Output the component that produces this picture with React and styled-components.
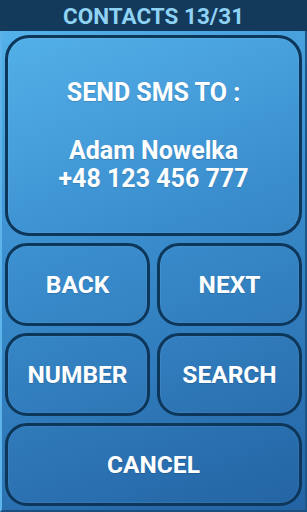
import React from 'react';
import styled, { createGlobalStyle } from 'styled-components';

const GlobalStyle = createGlobalStyle`
  html, body {
    margin: 0;
    padding: 0;
    background: #12385a;
  }
  * { box-sizing: border-box; }
`;

// Layout
const Screen = styled.div`
  width: 307px;
  height: 512px;
  display: flex;
  flex-direction: column;
  font-family: Roboto, 'Liberation Sans', sans-serif;
  overflow: hidden;
`;

const Header = styled.div`
  height: 31px;
  flex: none;
  background: #13395b;
  color: #8fd2f4;
  font-weight: 700;
  font-size: 22.5px;
  display: flex;
  align-items: center;
  justify-content: center;
  padding-top: 1px;
`;

const Panel = styled.div`
  flex: 1;
  background: linear-gradient(160deg, #54b1e9 0%, #3b8fcf 40%, #2363a3 100%);
  border-left: 2px solid #5cb4ea;
  border-right: 2px solid #1d5688;
  border-bottom: 2px solid #1a4f80;
  padding: 4px 3px 4px 3px;
  display: grid;
  grid-template-columns: 1fr 1fr;
  grid-template-rows: 201px 1fr 1fr 1fr;
  gap: 7px 7px;
`;

const Card = styled.div`
  grid-column: ${(p) => (p.wide ? '1 / span 2' : 'auto')};
  border: 3px solid #0d365b;
  border-radius: ${(p) => (p.big ? '24px' : '22px')};
  box-shadow: inset 0 0 0 1px rgba(255, 255, 255, 0.06);
  display: flex;
  flex-direction: column;
  align-items: center;
  justify-content: center;
  color: #ffffff;
  font-weight: 700;
  font-size: 24.5px;
  text-shadow: 0 1px 1px rgba(0, 0, 0, 0.15);
  cursor: pointer;
`;

const Line = styled.div`
  line-height: 28px;
  font-size: 25px;
  margin-top: ${(p) => p.gap || 0}px;
`;

export default function App() {
  return (
    <>
      <GlobalStyle />
      <Screen>
        <Header>CONTACTS 13/31</Header>
        <Panel>
          <Card wide big>
            <Line>SEND SMS TO :</Line>
            <Line gap={30}>Adam Nowelka</Line>
            <Line>+48 123 456 777</Line>
          </Card>
          <Card>BACK</Card>
          <Card>NEXT</Card>
          <Card>NUMBER</Card>
          <Card>SEARCH</Card>
          <Card wide>CANCEL</Card>
        </Panel>
      </Screen>
    </>
  );
}
